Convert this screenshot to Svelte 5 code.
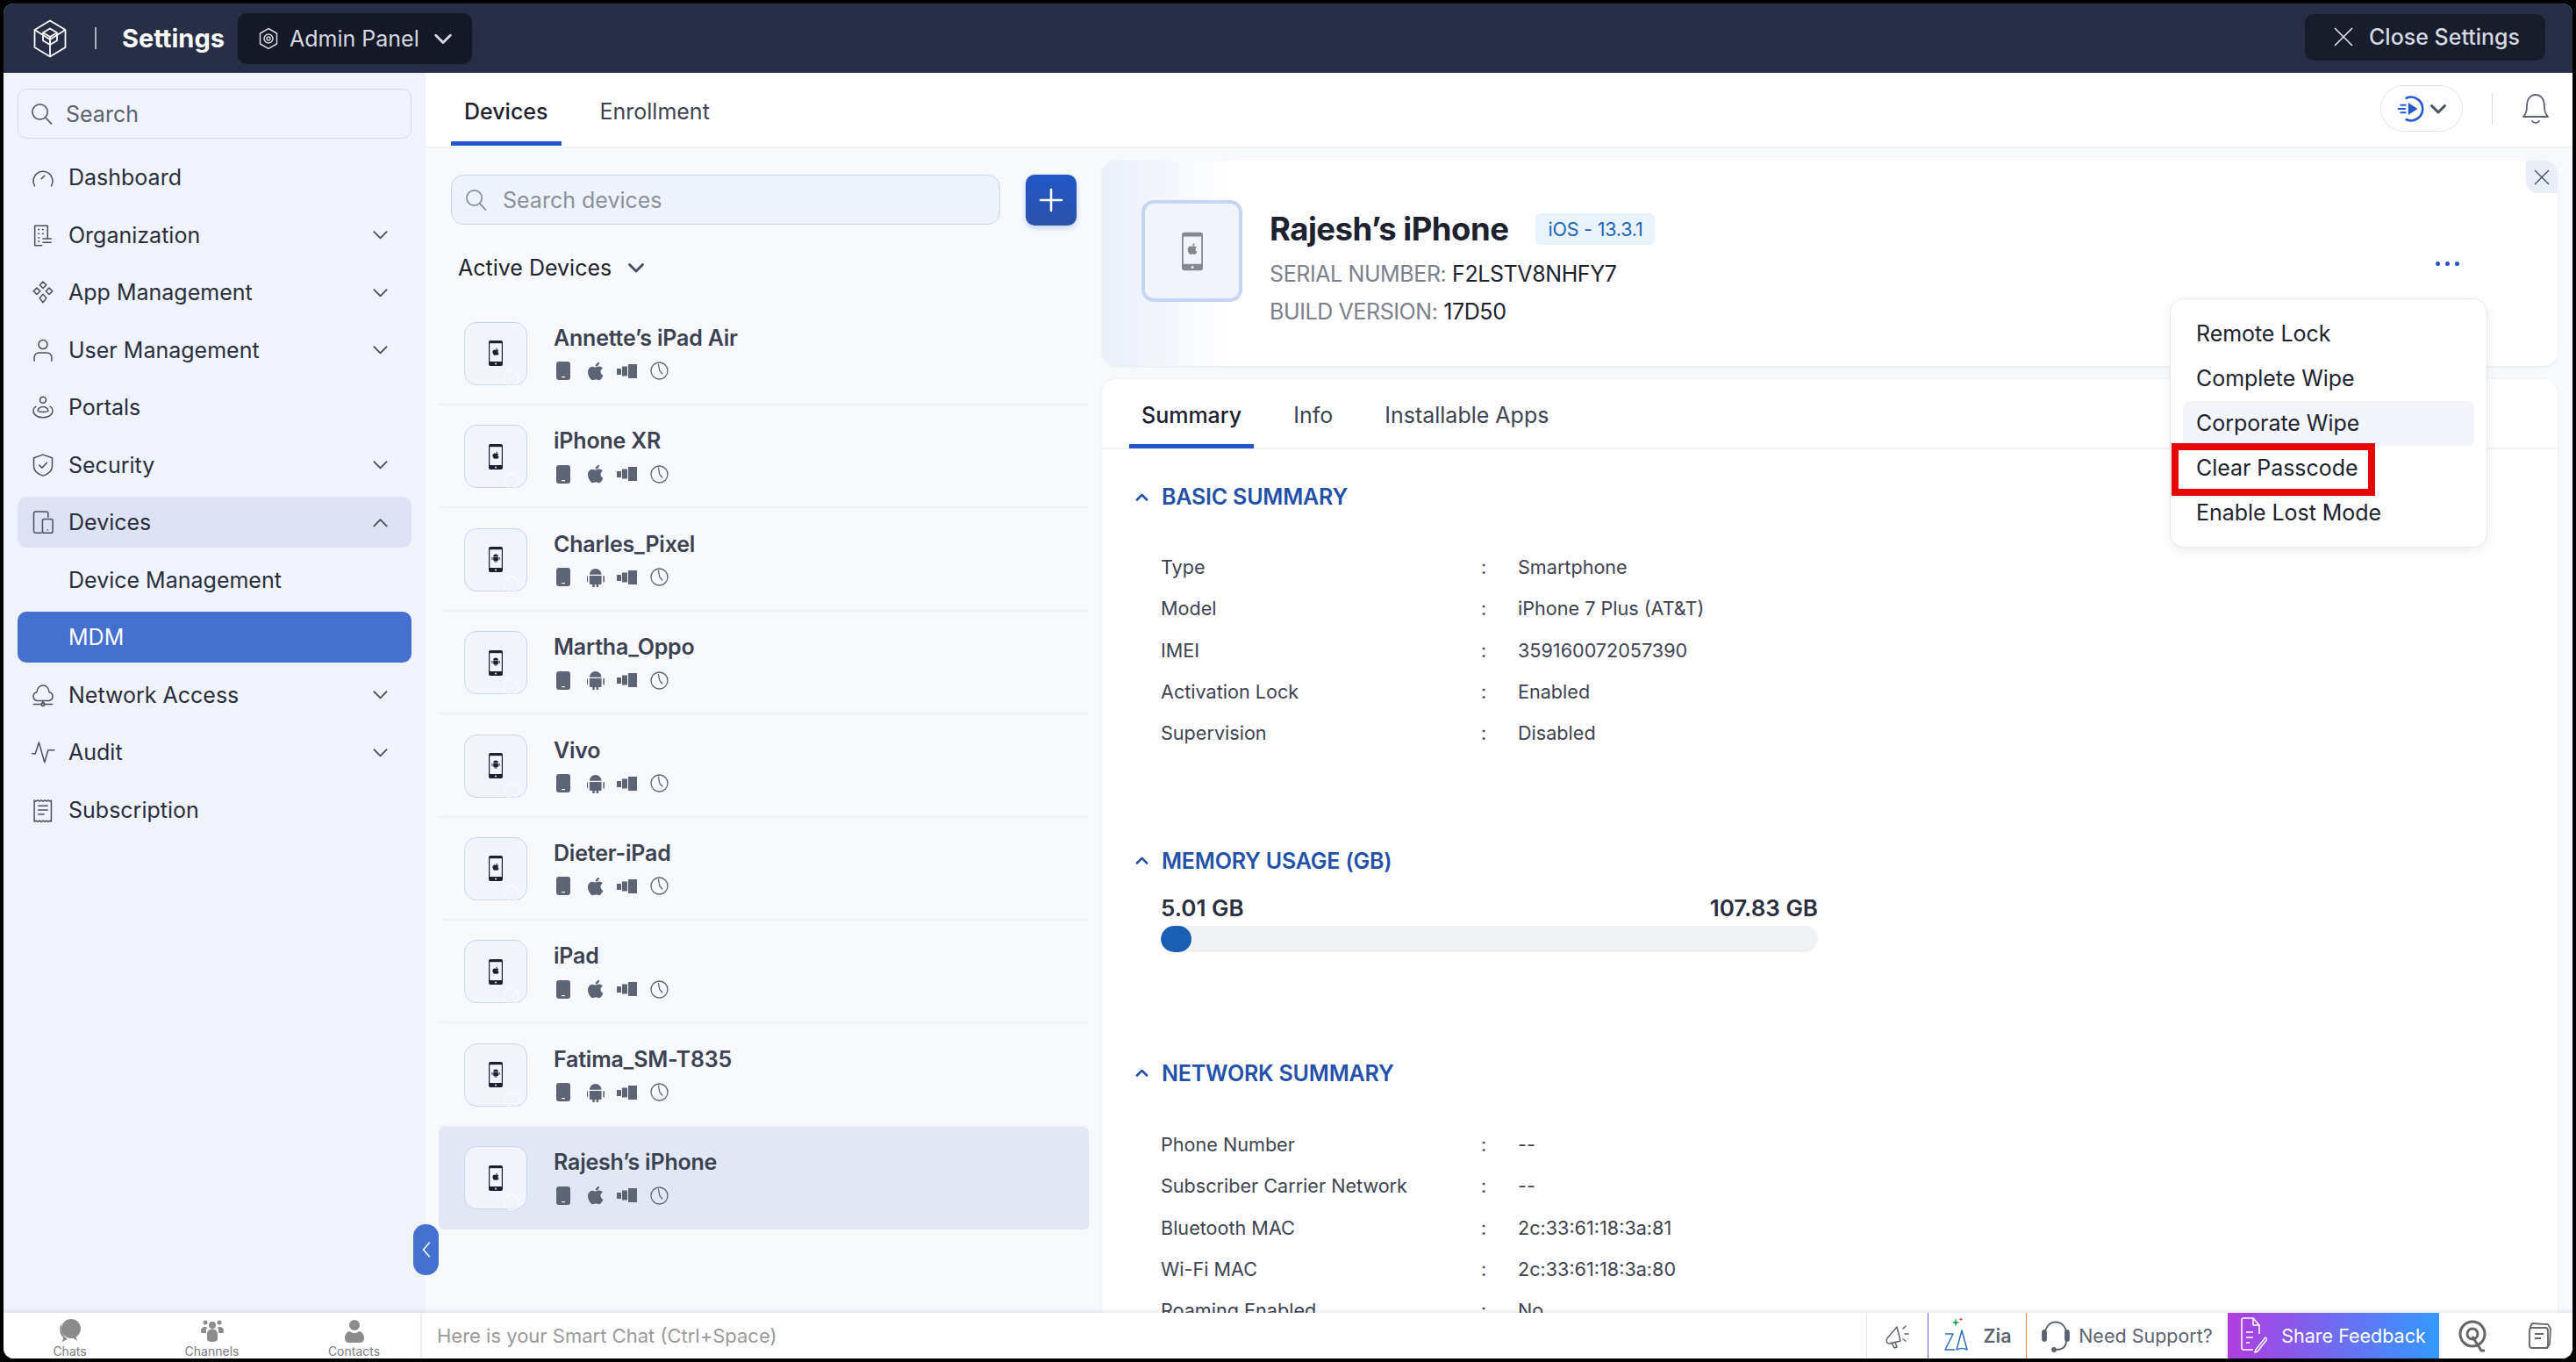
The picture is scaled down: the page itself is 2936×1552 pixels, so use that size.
<script lang="ts">
	const apple = 'M17.05 20.28c-.98.95-2.05.8-3.08.35-1.09-.46-2.09-.48-3.24 0-1.44.62-2.2.44-3.06-.35C2.79 15.25 3.51 7.59 9.05 7.31c1.35.07 2.29.74 3.08.8 1.18-.24 2.31-.93 3.57-.84 1.51.12 2.65.72 3.4 1.8-3.12 1.87-2.38 5.98.48 7.13-.57 1.5-1.31 2.99-2.54 4.09zM12.03 7.25c-.15-2.23 1.66-4.07 3.74-4.25.29 2.58-2.34 4.5-3.74 4.25z';
	const android = 'M6 9.2a6 6 0 0 1 12 0zM6 10.2h12v7.6a1.2 1.2 0 0 1-1.2 1.2H15v3a1.1 1.1 0 0 1-2.2 0v-3h-1.6v3a1.1 1.1 0 0 1-2.2 0v-3H7.2A1.2 1.2 0 0 1 6 17.800zM3.300 10.200a1.100 1.100 0 0 1 1.100 1.100v4.400a1.100 1.100 0 0 1-2.200 0v-4.400a1.100 1.100 0 0 1 1.100-1.100zM20.700 10.200a1.100 1.100 0 0 1 1.100 1.100v4.400a1.100 1.100 0 0 1-2.200 0v-4.400a1.100 1.100 0 0 1 1.100-1.100z';

	const navIcons: Record<string, string> = {
		dashboard: '<path d="M3.800 20.500a9.500 9.500 0 1 1 16.400 0"/><path d="M10.500 13.500l3-3"/>',
		org: '<path d="M4 22V2.800h12.500V15M4 22h7"/><path d="M7.500 6.500h.8M11.500 6.500h.8M7.500 10.500h.8M11.500 10.500h.8M7.500 14.500h.8M7.500 18h.8M12 15.500h8M12 19h8"/>',
		apps: '<path d="M12 1.800l3.200 3.200-3.200 3.200L8.800 5zM6 7.800L9.200 11 6 14.200 2.800 11zM18 7.800l3.200 3.200-3.200 3.200-3.200-3.200zM12 14l3.300 3.700L12 22l-3.300-4.300z"/>',
		user: '<circle cx="12" cy="6.500" r="4.300"/><path d="M3.500 22.500v-3.500a4.500 4.500 0 0 1 4.500-4.500h8a4.500 4.500 0 0 1 4.500 4.500v3.500"/>',
		portals: '<circle cx="12" cy="5" r="3"/><path d="M7 15.500a5 4 0 0 1 10 0c0 1.500-10 1.500-10 0z"/><path d="M5 11.500c-4.500 2.500-3 10.500 7 10.500s11.500-8 7-10.500"/>',
		security: '<path d="M12 1.800l9 3.200v8c0 4.500-4 7.700-9 9.400-5-1.700-9-4.900-9-9.400V5z"/><path d="M8.300 12l2.700 2.700 4.800-5"/>',
		devices: '<path d="M10.500 22.500H4.500A1.800 1.800 0 0 1 3 20.800V3.500A1.800 1.800 0 0 1 4.800 1.800h10.400a1.800 1.800 0 0 1 1.800 1.700V7"/><rect x="11.500" y="9" width="10" height="13.500" rx="1.600"/><path d="M16.500 19.500v.2"/>',
		network: '<path d="M6.500 17.500a4.200 4.200 0 0 1-.6-8.300C6.500 5.200 9 2.500 12 2.500s5.500 2.700 6.100 6.700a4.200 4.200 0 0 1-.6 8.300z"/><path d="M12 17.500v3M2.800 21h6.700M14.500 21h6.700"/><circle cx="12" cy="21" r="1.600"/>',
		audit: '<path d="M1.500 13.500h3l3.500-11 5.500 19.500 3.500-12h6"/>',
		subscription: '<path d="M3.500 2.500l1.700 1 1.700-1 1.700 1 1.700-1 1.700 1 1.700-1 1.700 1 1.700-1 1.700 1 1.300-.7v20.400l-1.300-.7-1.700 1-1.700-1-1.700 1-1.700-1-1.700 1-1.700-1-1.700 1-1.700-1-1.700.7z"/><path d="M7.500 8h9M7.500 12h9M7.500 16h5.500"/>'
	};

	const nav = [
		{ label: 'Dashboard', icon: 'dashboard' },
		{ label: 'Organization', icon: 'org', chevron: 'down' },
		{ label: 'App Management', icon: 'apps', chevron: 'down' },
		{ label: 'User Management', icon: 'user', chevron: 'down' },
		{ label: 'Portals', icon: 'portals' },
		{ label: 'Security', icon: 'security', chevron: 'down' },
		{ label: 'Devices', icon: 'devices', chevron: 'up', open: true },
		{ label: 'Device Management' },
		{ label: 'MDM', active: true },
		{ label: 'Network Access', icon: 'network', chevron: 'down' },
		{ label: 'Audit', icon: 'audit', chevron: 'down' },
		{ label: 'Subscription', icon: 'subscription' }
	];

	const devices = [
		{ name: 'Annette’s iPad Air', os: 'apple' },
		{ name: 'iPhone XR', os: 'apple' },
		{ name: 'Charles_Pixel', os: 'android' },
		{ name: 'Martha_Oppo', os: 'android' },
		{ name: 'Vivo', os: 'android' },
		{ name: 'Dieter-iPad', os: 'apple' },
		{ name: 'iPad', os: 'apple' },
		{ name: 'Fatima_SM-T835', os: 'android' },
		{ name: 'Rajesh’s iPhone', os: 'apple', selected: true }
	];

	const basic = [
		['Type', 'Smartphone'],
		['Model', 'iPhone 7 Plus (AT&T)'],
		['IMEI', '359160072057390'],
		['Activation Lock', 'Enabled'],
		['Supervision', 'Disabled']
	];

	const network = [
		['Phone Number', '--'],
		['Subscriber Carrier Network', '--'],
		['Bluetooth MAC', '2c:33:61:18:3a:81'],
		['Wi-Fi MAC', '2c:33:61:18:3a:80'],
		['Roaming Enabled', 'No']
	];

	const menu = ['Remote Lock', 'Complete Wipe', 'Corporate Wipe', 'Clear Passcode', 'Enable Lost Mode'];
</script>

{#snippet chevron(dir: string, size = 20)}
	<svg class="chev" width={size} height={size} viewBox="0 0 20 20" fill="none" stroke="currentColor" stroke-width="2" stroke-linecap="round" stroke-linejoin="round">
		{#if dir === 'up'}
			<path d="M2.500 14l7.500-7.500 7.500 7.500" />
		{:else}
			<path d="M2.500 6.500l7.500 7.500 7.500-7.500" />
		{/if}
	</svg>
{/snippet}

{#snippet search(size = 26)}
	<svg width={size} height={size} viewBox="0 0 26 26" fill="none" stroke="currentColor" stroke-width="1.800" stroke-linecap="round">
		<circle cx="11" cy="11" r="9" />
		<path d="M17.500 17.500l7 7.500" />
	</svg>
{/snippet}

{#snippet phone(os: string, w: number, h: number, color: string)}
	<svg width={w} height={h} viewBox="0 0 16 29">
		<rect width="16" height="29" rx="2" fill={color} />
		<rect x="1.200" y="3.200" width="13.600" height="20.800" fill="#f1f4fb" />
		<path d={os === 'apple' ? apple : android} fill={color} transform="translate(2.400 7) scale(.47)" />
		<circle cx="8" cy="26.500" r="1" fill="#f1f4fb" />
	</svg>
{/snippet}

<div class="window">
	<div class="frame">
		<header class="topbar">
			<svg class="logo" width="38" height="44" viewBox="0 0 38 44" fill="none" stroke="#fff" stroke-width="1.800" stroke-linejoin="round">
				<path d="M19 1.500l17.500 10.500v20L19 42.500 1.500 32V12z" />
				<path d="M1.500 12L19 23l17.500-11M19 23v19.500" />
				<path d="M19 10.500l8 4.800v9L19 29l-8-4.700v-9zM11 15.300l8 4.700 8-4.700M19 20v9" />
			</svg>
			<span class="logo-sep"></span>
			<span class="brand">Settings</span>
			<button class="admin">
				<svg width="22" height="26" viewBox="0 0 22 26" fill="none" stroke="#d5d8e0" stroke-width="1.500">
					<path d="M11 1.500l9.500 5.500v12L11 24.500 1.500 19V7z" />
					<circle cx="11" cy="13" r="5" />
					<circle cx="11" cy="13" r="2" />
				</svg>
				<span>Admin Panel</span>
				{@render chevron('down', 22)}
			</button>
			<button class="close-settings">
				<svg width="22" height="22" viewBox="0 0 22 22" stroke="#e4e6ec" stroke-width="1.600" fill="none"><path d="M1 1l20 20M21 1L1 21" /></svg>
				<span>Close Settings</span>
			</button>
		</header>

		<div class="body">
			<aside class="sidebar">
				<div class="side-search">
					{@render search(25)}
					<span>Search</span>
				</div>
				<nav class="nav">
					{#each nav as item}
						<div class="nav-item" class:open={item.open} class:active={item.active}>
							{#if item.icon}
								<svg class="nav-icon" width="28" height="30" viewBox="0 0 24 24" fill="none" stroke="#4a5060" stroke-width="1.300" stroke-linecap="round" stroke-linejoin="round">
									{@html navIcons[item.icon]}
								</svg>
							{/if}
							<span class="nav-label">{item.label}</span>
							{#if item.chevron}
								{@render chevron(item.chevron, 19)}
							{/if}
						</div>
					{/each}
				</nav>
				<button class="collapse" aria-label="Collapse">
					<svg width="10" height="20" viewBox="0 0 10 20" fill="none" stroke="#fff" stroke-width="1.600" stroke-linecap="round" stroke-linejoin="round"><path d="M8.500 2L1.500 10l7 8" /></svg>
				</button>
			</aside>

			<main class="main">
				<div class="tabbar">
					<div class="tab active">Devices</div>
					<div class="tab">Enrollment</div>
					<div class="tabbar-right">
						<div class="pill">
							<svg width="32" height="32" viewBox="0 0 30 30" fill="none" stroke="#2259d0" stroke-width="2.400" stroke-linecap="round">
								<path d="M10 3.500a12.500 12.500 0 1 1 0 23" />
								<path d="M12 8.500l10 6.500-10 6.500z" fill="#2259d0" stroke="none" />
								<path d="M4 11h5M1.500 15h7M4 19h5" stroke-width="1.800" />
							</svg>
							{@render chevron('down', 20)}
						</div>
						<span class="bar-sep"></span>
						<svg width="32" height="36" viewBox="0 0 32 36" fill="none" stroke="#5c6270" stroke-width="1.800" stroke-linecap="round" stroke-linejoin="round">
							<path d="M2 27c3-3 4-6 4-12C6 7 10 2 16 2s10 5 10 13c0 6 1 9 4 12z" />
							<path d="M12 32c2 2.500 6 2.500 8 0" />
						</svg>
					</div>
				</div>

				<div class="content">
					<section class="list-col">
						<div class="list-tools">
							<div class="dev-search">
								{@render search(25)}
								<span>Search devices</span>
							</div>
							<button class="add" aria-label="Add">
								<svg width="28" height="28" viewBox="0 0 28 28" stroke="#fff" stroke-width="2.600" stroke-linecap="round"><path d="M14 2v24M2 14h24" /></svg>
							</button>
						</div>
						<div class="list-filter">
							<span>Active Devices</span>
							{@render chevron('down', 20)}
						</div>
						<div class="device-list">
							{#each devices as d}
								<div class="device" class:selected={d.selected}>
									<div class="thumb">
										{@render phone(d.os, 16, 29, '#1d2030')}
										<span class="thumb-ring"></span>
									</div>
									<div class="device-info">
										<div class="device-name">{d.name}</div>
										<div class="device-meta">
											<svg width="16" height="21" viewBox="0 0 16 21"><rect width="16" height="21" rx="3" fill="#5d6475" /><rect x="6" y="17" width="4" height="1.200" fill="#fff" /></svg>
											<svg class="os-mark" width="20" height="22" viewBox="3.500 2.500 17.500 19" fill="#5d6475"><path d={d.os === 'apple' ? apple : android} /></svg>
											<svg width="23" height="16" viewBox="0 0 23 16" fill="#5d6475"><rect y="5" width="5" height="7" /><rect x="6" y="2.500" width="6" height="11" /><rect x="13" width="10" height="16" /></svg>
											<svg width="21" height="21" viewBox="0 0 21 21" fill="none" stroke="#5d6475" stroke-width="1.300" stroke-linecap="round"><circle cx="10.500" cy="10.500" r="9.500" /><path d="M9.500 3.500l1.300 7 3 3.500" /></svg>
										</div>
									</div>
								</div>
							{/each}
						</div>
					</section>

					<section class="detail">
						<div class="device-card">
							<div class="big-thumb">
								{@render phone('apple', 24, 45, '#85888f')}
							</div>
							<div class="card-info">
								<div class="card-title">
									<h1>Rajesh’s iPhone</h1>
									<span class="os-badge">iOS - 13.3.1</span>
								</div>
								<div class="card-line"><span>SERIAL NUMBER:</span> F2LSTV8NHFY7</div>
								<div class="card-line"><span>BUILD VERSION:</span> 17D50</div>
							</div>
							<div class="dots"><i></i><i></i><i></i></div>
							<button class="card-close" aria-label="Close">
								<svg width="18" height="18" viewBox="0 0 18 18" stroke="#4a5060" stroke-width="1.400" fill="none"><path d="M1 1l16 16M17 1L1 17" /></svg>
							</button>
						</div>

						<div class="summary-card">
							<div class="sum-tabs">
								<div class="sum-tab active">Summary</div>
								<div class="sum-tab">Info</div>
								<div class="sum-tab">Installable Apps</div>
							</div>

							<div class="sum-body">
								<h2>{@render chevron('up', 15)}BASIC SUMMARY</h2>
								<div class="rows basic">
									{#each basic as [k, v]}
										<div class="row"><span>{k}</span><span>:</span><span class="val">{v}</span></div>
									{/each}
								</div>

								<h2 class="memory-head">{@render chevron('up', 15)}MEMORY USAGE (GB)</h2>
								<div class="memory">
									<div class="mem-labels"><span>5.01 GB</span><span>107.83 GB</span></div>
									<div class="mem-track"><div class="mem-fill" style="width: {(5.01 / 107.83) * 100}%"></div></div>
								</div>

								<h2 class="network-head">{@render chevron('up', 15)}NETWORK SUMMARY</h2>
								<div class="rows net">
									{#each network as [k, v]}
										<div class="row"><span>{k}</span><span>:</span><span class="val">{v}</span></div>
									{/each}
								</div>
							</div>
						</div>

						<div class="action-menu">
							{#each menu as m}
								<div class="action" class:hover={m === 'Corporate Wipe'} class:marked={m === 'Clear Passcode'}>{m}</div>
							{/each}
						</div>
					</section>
				</div>
			</main>
		</div>

		<footer class="footer">
			<div class="foot-left">
				<div class="foot-tab">
					<svg width="26" height="28" viewBox="0 0 26 28" fill="#8c8c8c"><path d="M3 5C0 10 1 18 5 21l-1 5 6-3c-5-3-8-10-7-18z" /><circle cx="14" cy="11" r="11" /><path d="M14 20l7 5-2-7z" /></svg>
					<span>Chats</span>
				</div>
				<div class="foot-tab">
					<svg width="26" height="28" viewBox="0 0 26 28" fill="#8c8c8c"><circle cx="5" cy="4" r="2.500" /><circle cx="21" cy="4" r="2.500" /><circle cx="13" cy="7" r="4" /><path d="M0 14c0-3 1.500-5 5-5 1 0 2 .5 2 1-1 1-1.500 3-1 6H1c-.6 0-1-1-1-2zM26 14c0-3-1.500-5-5-5-1 0-2 .5-2 1 1 1 1.500 3 1 6h5c.6 0 1-1 1-2zM7 18c0-4 2-6.500 6-6.500s6 2.500 6 6.500v5c0 2-2 3-6 3s-6-1-6-3z" /></svg>
					<span>Channels</span>
				</div>
				<div class="foot-tab">
					<svg width="22" height="28" viewBox="0 0 22 28" fill="#8c8c8c"><circle cx="11" cy="7" r="6" /><path d="M0 22c0-5 3-8 6-8 1.500 1.500 3 2 5 2s3.500-.5 5-2c3 0 6 3 6 8 0 3-2 5-5 5H5c-3 0-5-2-5-5z" /></svg>
					<span>Contacts</span>
				</div>
			</div>
			<div class="smart-chat">Here is your Smart Chat (Ctrl+Space)</div>
			<div class="foot-right">
				<div class="foot-cell megaphone">
					<svg width="30" height="32" viewBox="0 0 30 32" fill="none" stroke="#5d6370" stroke-width="1.500" stroke-linejoin="round" stroke-linecap="round">
						<path d="M3 19l11-13 4 16-12 3c-3 .5-5-3-3-6z" />
						<path d="M8 24l3 6 3-1-2-5.500" />
						<path d="M21 8l3-3M23 14h4M21 20l3 2" />
					</svg>
				</div>
				<div class="foot-cell zia">
					<svg width="28" height="44" viewBox="0 0 28 44" fill="none" stroke="#2a6fb5" stroke-width="1.500" stroke-linejoin="round">
						<path d="M14 2l1 4 4 1-4 1-1 4-1-4-4-1 4-1z" fill="#12a150" stroke="none" />
						<path d="M20 1l.6 1.800 1.800.6-1.800.6-.6 1.800-.6-1.800-1.800-.6 1.800-.6z" fill="#e33" stroke="none" />
						<path d="M2 20h9L2 38h11" />
						<path d="M15 38l6-22 6 22c-4-2-8-2-12 0z" />
					</svg>
					<span>Zia</span>
				</div>
				<div class="foot-cell support">
					<svg width="32" height="44" viewBox="0 0 32 44" fill="none" stroke="#5d6370" stroke-width="1.800" stroke-linecap="round">
						<path d="M4 20c0-18 24-18 24 0v8c0 8-6 10-12 10" />
						<rect x="1" y="16" width="4" height="12" rx="2" fill="#5d6370" />
						<rect x="27" y="16" width="4" height="12" rx="2" fill="#5d6370" />
						<circle cx="14" cy="38" r="2" fill="#5d6370" />
					</svg>
					<span>Need Support?</span>
				</div>
				<div class="foot-cell feedback">
					<svg width="30" height="44" viewBox="0 0 30 44" fill="none" stroke="#fff" stroke-width="1.500" stroke-linejoin="round">
						<path d="M14 38H3a2 2 0 0 1-2-2V4a2 2 0 0 1 2-2h11l7 8v10" />
						<path d="M14 2v8h7M6 18h8M6 24h8M6 30h4" />
						<path d="M17 38l11-14 2 2-11 14-3 1z" />
					</svg>
					<span>Share Feedback</span>
				</div>
				<div class="foot-cell">
					<svg width="32" height="38" viewBox="0 0 32 38" fill="none" stroke="#666" stroke-width="3">
						<circle cx="16" cy="17" r="14" />
						<circle cx="16" cy="17" r="6" />
						<path d="M16 20l10 16h4" />
					</svg>
				</div>
				<div class="foot-cell">
					<svg width="28" height="32" viewBox="0 0 28 32" fill="none" stroke="#666" stroke-width="1.800">
						<path d="M4 6l2-4 18 1 3 5-1 18-3 4-16 0-4-4z" />
						<rect x="3" y="7" width="21" height="23" rx="3" fill="#fff" />
						<path d="M9 14h10M9 19h7" />
					</svg>
				</div>
			</div>
		</footer>
	</div>
</div>

<style>
	:global(body) {
		background: #000;
	}

	.window {
		box-sizing: border-box;
		height: 1552px;
		padding: 4px;
		background: #000;
		font-family: Inter, 'Liberation Sans', sans-serif;
		color: #20232f;
	}

	.frame {
		display: flex;
		flex-direction: column;
		height: 100%;
		overflow: hidden;
		border-radius: 12px;
		background: #fff;
	}

	button {
		font-family: inherit;
		border: none;
		padding: 0;
	}

	/* top bar */
	.topbar {
		flex: none;
		display: flex;
		align-items: center;
		height: 79px;
		padding: 0 31px 0 34px;
		background: #282e45;
		box-sizing: border-box;
	}

	.logo-sep {
		width: 2px;
		height: 25px;
		margin: 0 29px 0 32px;
		background: #aab0c0;
	}

	.brand {
		font-size: 29px;
		font-weight: 700;
		color: #fff;
	}

	.admin {
		display: flex;
		align-items: center;
		width: 267px;
		height: 58px;
		margin-left: 15px;
		padding-left: 24px;
		gap: 13px;
		border-radius: 10px;
		background: #151825;
		color: #d5d8e0;
		font-size: 25px;
		box-sizing: border-box;
	}

	.admin :global(.chev) {
		color: #d5d8e0;
		margin-left: 3px;
		stroke-width: 2.600;
	}

	.close-settings {
		display: flex;
		align-items: center;
		gap: 18px;
		width: 274px;
		height: 53px;
		margin-left: auto;
		margin-top: -3px;
		padding-left: 33px;
		border-radius: 10px;
		background: #191d2b;
		color: #d5d8e0;
		font-size: 25px;
		font-weight: 500;
		box-sizing: border-box;
	}

	.body {
		flex: 1;
		min-height: 0;
		display: flex;
	}

	/* sidebar */
	.sidebar {
		position: relative;
		flex: none;
		box-sizing: border-box;
		width: 481px;
		padding: 18px 16px 0;
		background: #f0f3fb;
	}

	.side-search {
		display: flex;
		align-items: center;
		gap: 15px;
		height: 57px;
		padding-left: 14px;
		border: 1.5px solid #d5d9e2;
		border-radius: 10px;
		box-sizing: border-box;
		color: #5c6270;
		font-size: 25px;
	}

	.nav {
		display: flex;
		flex-direction: column;
		gap: 7.550px;
		margin-top: 15px;
	}

	.nav-item {
		position: relative;
		display: flex;
		align-items: center;
		height: 58px;
		padding: 0 26px 0 58px;
		border-radius: 10px;
		font-size: 25px;
		color: #2a2e3e;
	}

	.nav-item.open {
		background: #dde3f4;
	}

	.nav-item.active {
		background: #4470d0;
		color: #fff;
	}

	.nav-icon {
		position: absolute;
		left: 15px;
		top: 14px;
	}

	.nav-label {
		flex: 1;
	}

	.chev {
		flex: none;
		color: #4a5060;
	}

	.collapse {
		position: absolute;
		right: -15px;
		top: 1312px;
		z-index: 3;
		display: flex;
		align-items: center;
		justify-content: center;
		width: 29px;
		height: 58px;
		border-radius: 14px;
		background: #4470d0;
	}

	/* main */
	.main {
		flex: 1;
		min-width: 0;
		display: flex;
		flex-direction: column;
		background: #f7f9fd;
	}

	.tabbar {
		flex: none;
		display: flex;
		align-items: stretch;
		box-sizing: border-box;
		height: 86px;
		padding: 0 26px 0 29px;
		background: #fff;
		border-bottom: 2px solid #eff1f5;
	}

	.tab {
		position: relative;
		display: flex;
		align-items: center;
		padding: 4px 15px 0;
		margin-right: 29px;
		font-size: 25px;
		color: #3e4352;
	}

	.tab.active {
		color: #1d2130;
		font-weight: 500;
	}

	.tab.active::after {
		content: '';
		position: absolute;
		left: 0;
		right: 0;
		bottom: 1px;
		height: 5px;
		background: #2255c8;
	}

	.tabbar-right {
		display: flex;
		align-items: center;
		margin-left: auto;
		padding-bottom: 3px;
	}

	.pill {
		display: flex;
		align-items: center;
		justify-content: center;
		gap: 5px;
		width: 94px;
		height: 53px;
		box-sizing: border-box;
		border: 1.5px solid #dfe2e8;
		border-radius: 27px;
	}

	.pill :global(.chev) {
		stroke-width: 3;
	}

	.bar-sep {
		width: 1px;
		height: 36px;
		margin: 0 33px;
		background: #d5d8de;
	}

	.content {
		flex: 1;
		min-height: 0;
		display: flex;
	}

	/* device list */
	.list-col {
		flex: none;
		box-sizing: border-box;
		width: 771px;
		padding: 30px 15px 0;
	}

	.list-tools {
		display: flex;
		gap: 29px;
		padding: 0 14px;
	}

	.dev-search {
		display: flex;
		align-items: center;
		gap: 18px;
		width: 626px;
		height: 57px;
		padding-left: 15px;
		box-sizing: border-box;
		border: 1.5px solid #c6d5f2;
		border-radius: 14px;
		background: #eef2fa;
		color: #8b909c;
		font-size: 25px;
	}

	.add {
		display: flex;
		align-items: center;
		justify-content: center;
		width: 58px;
		height: 58px;
		border-radius: 10px;
		background: linear-gradient(#2257c9, #2a52a8);
		box-shadow: 0 3px 6px rgba(34, 87, 201, 0.25);
	}

	.list-filter {
		display: flex;
		align-items: center;
		gap: 18px;
		height: 44px;
		margin-top: 26px;
		padding-left: 22px;
		font-size: 25px;
		color: #20232f;
	}

	.list-filter :global(.chev) {
		stroke-width: 3;
	}

	.device-list {
		margin-top: 17.600px;
	}

	.device {
		display: flex;
		box-sizing: border-box;
		height: 117.400px;
		padding: 22.400px 0 0 29px;
		gap: 30px;
		border-bottom: 2px solid #f0f2f6;
	}

	.device.selected {
		background: #e1e7f4;
		border-bottom: none;
		border-radius: 6px;
	}

	.thumb {
		position: relative;
		flex: none;
		display: flex;
		align-items: center;
		justify-content: center;
		width: 72px;
		height: 72px;
		box-sizing: border-box;
		border: 1.5px solid #c6d6f5;
		border-radius: 14px;
		background: #f1f4fb;
	}

	.thumb-ring {
		position: absolute;
		right: 8px;
		bottom: -2px;
		width: 18px;
		height: 18px;
		box-sizing: border-box;
		border: 1px solid #fff;
		border-radius: 50%;
	}

	.device-name {
		height: 36px;
		line-height: 36px;
		font-size: 25px;
		font-weight: 600;
		color: #3c4252;
		letter-spacing: -0.2px;
	}

	.device-meta {
		display: flex;
		align-items: center;
		gap: 14.500px;
		margin-top: 9px;
		padding-left: 3px;
	}

	.os-mark {
		margin-left: 4px;
	}

	/* right panel */
	.detail {
		position: relative;
		flex: 1;
		min-width: 0;
		display: flex;
		flex-direction: column;
		gap: 15px;
		padding: 14px 17px 0 0;
	}

	.device-card {
		position: relative;
		flex: none;
		display: flex;
		box-sizing: border-box;
		height: 234px;
		padding: 45px 0 0 45px;
		border-radius: 16px;
		background: linear-gradient(90deg, #e9eef9, #fff 150px);
		box-shadow: 0 1px 3px rgba(40, 50, 80, 0.08);
	}

	.big-thumb {
		flex: none;
		display: flex;
		align-items: center;
		justify-content: center;
		width: 115px;
		height: 116px;
		box-sizing: border-box;
		border: 4px solid #c5d5f3;
		border-radius: 14px;
		background: #f1f4fb;
	}

	.card-info {
		margin-left: 31px;
	}

	.card-title {
		display: flex;
		align-items: center;
		gap: 31px;
		height: 60px;
		margin-top: 3px;
	}

	.card-title h1 {
		margin: 0;
		font-size: 36.500px;
		font-weight: 700;
		color: #1d2130;
		letter-spacing: -0.5px;
	}

	.os-badge {
		padding: 0 14px;
		height: 36px;
		line-height: 36px;
		border-radius: 6px;
		background: #e8f3fd;
		color: #2264b8;
		font-size: 21.500px;
		letter-spacing: -0.2px;
	}

	.card-line {
		height: 43px;
		line-height: 43px;
		font-size: 25px;
		letter-spacing: -0.4px;
		color: #1d2130;
	}

	.card-line span {
		color: #7d818c;
	}

	.dots {
		display: flex;
		gap: 6px;
		align-self: center;
		margin: -44px 112px 0 auto;
	}

	.dots i {
		width: 5px;
		height: 5px;
		border-radius: 50%;
		background: #2255c8;
	}

	.card-close {
		position: absolute;
		top: 0;
		right: 0;
		display: flex;
		align-items: center;
		justify-content: center;
		width: 36px;
		height: 37px;
		border-radius: 0 16px 0 14px;
		background: #e8edf8;
	}

	.summary-card {
		flex: 1;
		min-height: 0;
		overflow: hidden;
		background: #fff;
		border-radius: 16px 16px 0 0;
		box-shadow: 0 0 3px rgba(40, 50, 80, 0.08);
	}

	.sum-tabs {
		display: flex;
		gap: 31px;
		box-sizing: border-box;
		height: 80px;
		padding-left: 31px;
		border-bottom: 2px solid #eff1f5;
	}

	.sum-tab {
		position: relative;
		display: flex;
		align-items: center;
		padding: 2px 14px 0;
		height: 78px;
		font-size: 25px;
		color: #3e4352;
	}

	.sum-tab.active {
		color: #1d2130;
		font-weight: 500;
	}

	.sum-tab.active::after {
		content: '';
		position: absolute;
		left: 0;
		right: 0;
		bottom: 1px;
		height: 5px;
		background: #2255c8;
	}

	.sum-body {
		padding: 34px 0 0 38px;
	}

	h2 {
		display: flex;
		align-items: center;
		gap: 15px;
		height: 40px;
		margin: 0;
		font-size: 25px;
		font-weight: 600;
		color: #2450a8;
		letter-spacing: -0.2px;
	}

	h2 :global(.chev) {
		color: #2450a8;
		stroke-width: 3.400;
	}

	.rows {
		padding-left: 29px;
	}

	.rows.basic {
		margin-top: 36.400px;
	}

	.rows.net {
		margin-top: 37.600px;
	}

	.row {
		display: grid;
		grid-template-columns: 365px 42px 1fr;
		align-items: center;
		height: 47.300px;
		font-size: 21.600px;
		color: #3e4352;
	}

	.row .val {
		color: #3e4352;
	}

	.memory-head {
		margin-top: 102px;
	}

	.memory {
		width: 749px;
		margin: 19px 0 0 29px;
	}

	.mem-labels {
		display: flex;
		justify-content: space-between;
		font-size: 26px;
		font-weight: 600;
		line-height: 30px;
		color: #2a2e3e;
	}

	.mem-track {
		height: 30px;
		margin-top: 5px;
		border-radius: 15px;
		background: #f0f1f3;
		overflow: hidden;
	}

	.mem-fill {
		height: 100%;
		border-radius: 15px;
		background: #1a5fb4;
	}

	.network-head {
		margin-top: 118px;
	}

	/* actions menu */
	.action-menu {
		position: absolute;
		top: 171px;
		right: 97px;
		z-index: 2;
		width: 362px;
		height: 284px;
		padding: 14px 14px;
		box-sizing: border-box;
		border: 1.5px solid #e6e9ef;
		border-radius: 16px;
		background: #fff;
		box-shadow: 0 4px 12px rgba(40, 50, 80, 0.08);
	}

	.action {
		position: relative;
		height: 51px;
		line-height: 51px;
		padding-left: 15px;
		border-radius: 8px;
		font-size: 25px;
		letter-spacing: -0.05px;
		color: #20232f;
	}

	.action.hover {
		background: #f3f5fb;
	}

	.action.marked::after {
		content: '';
		position: absolute;
		left: -13px;
		top: -3px;
		width: 232px;
		height: 60px;
		box-sizing: border-box;
		border: 8px solid #e60606;
	}

	/* bottom bar */
	.footer {
		flex: none;
		display: flex;
		height: 52px;
		background: #fff;
		box-shadow: 0 -2px 5px rgba(40, 50, 80, 0.12);
		z-index: 4;
	}

	.foot-left {
		flex: none;
		display: grid;
		grid-template-columns: repeat(3, 162px);
		width: 477px;
		border-right: 2px solid #eceef2;
		box-sizing: border-box;
	}

	.foot-tab {
		display: flex;
		flex-direction: column;
		align-items: center;
		justify-content: flex-end;
		margin-left: -11px;
		color: #7d7d7d;
		font-size: 14px;
		line-height: 16px;
	}

	.foot-tab svg {
		margin-bottom: 1px;
	}

	.smart-chat {
		flex: 1;
		padding-left: 17px;
		line-height: 52px;
		font-size: 22px;
		color: #9a9a9a;
	}

	.foot-right {
		flex: none;
		display: flex;
	}

	.foot-cell {
		display: flex;
		align-items: center;
		justify-content: center;
		gap: 10px;
		font-size: 21.500px;
		color: #5d6370;
		width: 76px;
	}

	.foot-cell.megaphone {
		width: 69px;
		border-left: 1px solid #e2e4e8;
	}

	.foot-cell.zia {
		width: 111px;
		gap: 18px;
		border-left: 1px solid #6a5ae0;
		font-weight: 600;
	}

	.foot-cell.support {
		width: 229px;
		border-left: 1px solid #f08a3c;
	}

	.foot-cell.feedback {
		width: 241px;
		gap: 16px;
		color: #fff;
		background: linear-gradient(90deg, #b03de0, #3399ff);
	}
</style>
